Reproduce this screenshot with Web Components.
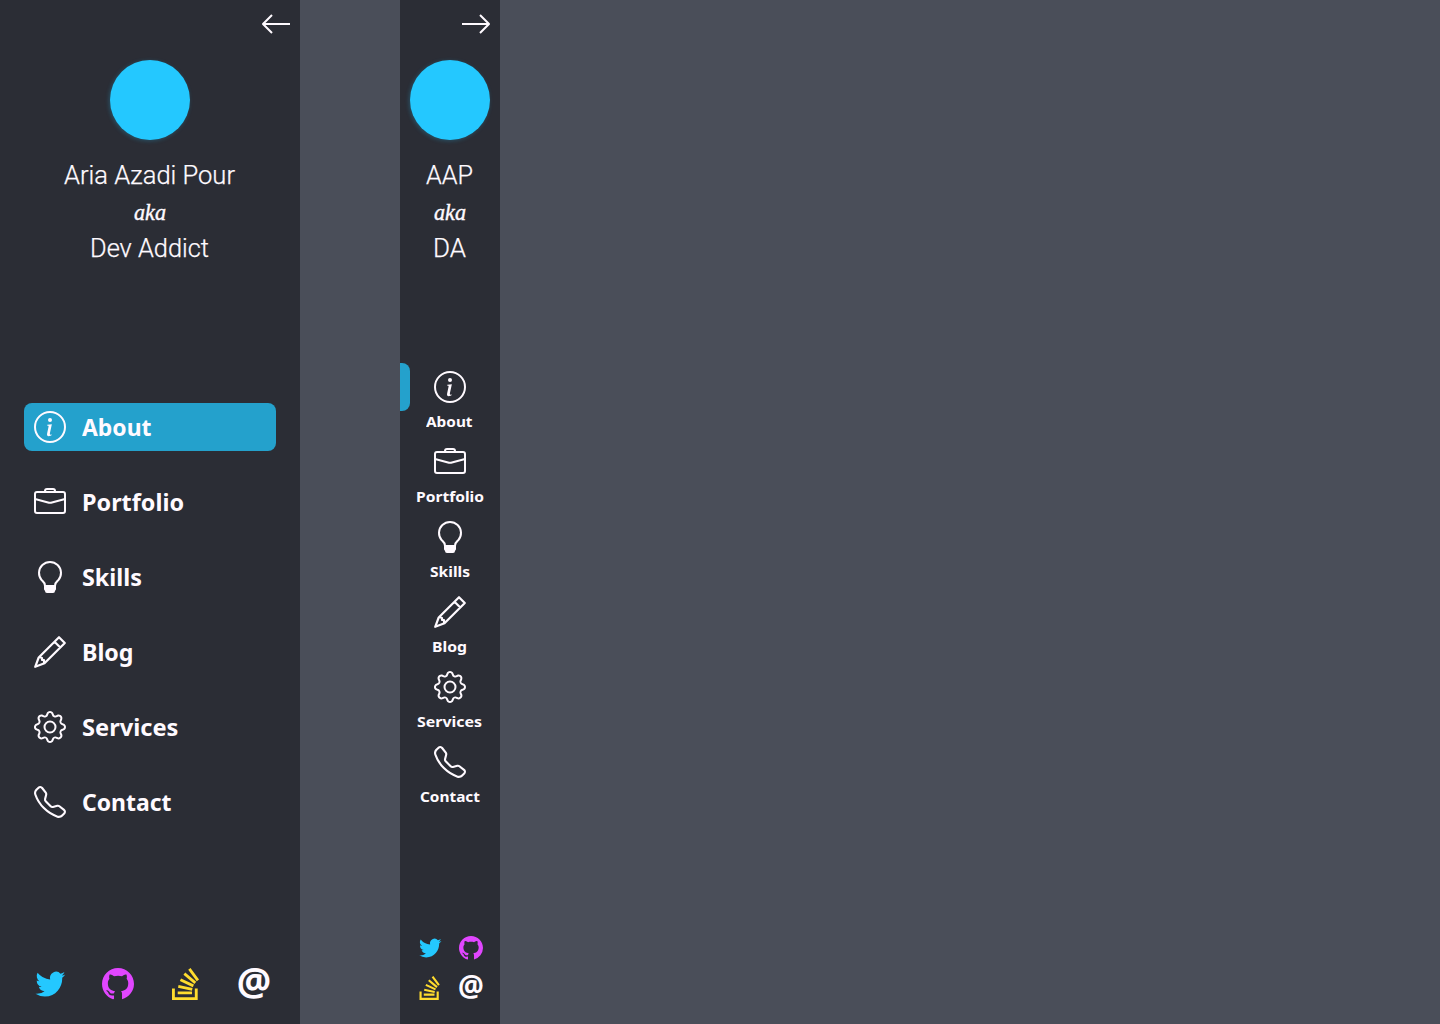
<!DOCTYPE html>
<html lang="en">
<head>
<meta charset="utf-8">
<title>Sidebar</title>
<style>
html,body{margin:0;height:100%}
body{background:#4a4e59;overflow:hidden;font-family:"Noto Sans",sans-serif;color:#fff}
</style>
</head>
<body>
<sidebar-showcase>
  <side-bar>
    <profile-card slot="profile" name="Aria Azadi Pour" name-width="171" alias="Dev Addict" alias-width="119"></profile-card>
    <nav-item icon="info" width="69.5" active>About</nav-item>
    <nav-item icon="briefcase" width="102">Portfolio</nav-item>
    <nav-item icon="bulb" width="60">Skills</nav-item>
    <nav-item icon="pencil" width="51.5">Blog</nav-item>
    <nav-item icon="gear" width="96.5">Services</nav-item>
    <nav-item icon="phone" width="89.5">Contact</nav-item>
  </side-bar>
  <side-bar compact>
    <profile-card slot="profile" name="AAP" name-width="47" alias="DA" alias-width="33"></profile-card>
    <nav-item compact icon="info" width="46.5" active>About</nav-item>
    <nav-item compact icon="briefcase" width="68">Portfolio</nav-item>
    <nav-item compact icon="bulb" width="40">Skills</nav-item>
    <nav-item compact icon="pencil" width="35">Blog</nav-item>
    <nav-item compact icon="gear" width="65">Services</nav-item>
    <nav-item compact icon="phone" width="60">Contact</nav-item>
  </side-bar>
</sidebar-showcase>
<script>
const ICONS = {
  left: '<path d="M30 16H3M12 7L3 16l9 9" fill="none" stroke="currentColor" stroke-width="2" stroke-linejoin="round"/>',
  right: '<path d="M2 16h27M20 7l9 9-9 9" fill="none" stroke="currentColor" stroke-width="2" stroke-linejoin="round"/>',
  info: '<circle cx="16" cy="16" r="15" fill="none" stroke="currentColor" stroke-width="2"/><g transform="scale(2)"><path d="M8.93 6.588l-2.29.287-.082.38.45.083c.294.07.352.176.288.469l-.738 3.468c-.194.897.105 1.319.808 1.319.545 0 1.178-.252 1.465-.598l.088-.416c-.2.176-.492.246-.686.246-.275 0-.375-.193-.304-.533L8.93 6.588z"/><circle cx="8" cy="4.5" r="1"/></g>',
  briefcase: '<g fill="none" stroke="currentColor" stroke-width="2"><rect x="1" y="6" width="30" height="21" rx="2"/><path d="M11 6V5a2 2 0 0 1 2-2h6a2 2 0 0 1 2 2v1M1 13l14 3.700q1 .3 2 0L31 13"/></g>',
  bulb: '<path d="M11 25c0-3.500-1.200-4-3.200-5.700A11 11 0 1 1 24.200 19.300C22.200 21 21 21.500 21 25" fill="none" stroke="currentColor" stroke-width="2"/><path d="M10 24h12v4a2 2 0 0 1-1 1.700V30a2 2 0 0 1-2 2h-6a2 2 0 0 1-2-2v-.300A2 2 0 0 1 10 28z"/>',
  pencil: '<g fill="none" stroke="currentColor" stroke-width="2.200" stroke-linejoin="round"><path d="M25 1.200L30.800 7 10.500 27.300 1.200 30.800 4.700 21.500zM20.500 5.700l5.800 5.800M5.500 21L8 22v2h2v2l1 1"/></g>',
  gear: '<g transform="scale(2)"><path d="M8 4.754a3.246 3.246 0 1 0 0 6.492 3.246 3.246 0 0 0 0-6.492zM5.754 8a2.246 2.246 0 1 1 4.492 0 2.246 2.246 0 0 1-4.492 0z"/><path d="M9.796 1.343c-.527-1.79-3.065-1.79-3.592 0l-.094.319a.873.873 0 0 1-1.255.52l-.292-.16c-1.64-.892-3.433.902-2.54 2.541l.159.292a.873.873 0 0 1-.52 1.255l-.319.094c-1.79.527-1.79 3.065 0 3.592l.319.094a.873.873 0 0 1 .52 1.255l-.16.292c-.892 1.64.901 3.434 2.541 2.54l.292-.159a.873.873 0 0 1 1.255.52l.094.319c.527 1.79 3.065 1.79 3.592 0l.094-.319a.873.873 0 0 1 1.255-.52l.292.16c1.64.893 3.434-.902 2.54-2.541l-.159-.292a.873.873 0 0 1 .52-1.255l.319-.094c1.79-.527 1.79-3.065 0-3.592l-.319-.094a.873.873 0 0 1-.52-1.255l.16-.292c.893-1.64-.902-3.433-2.541-2.54l-.292.159a.873.873 0 0 1-1.255-.52l-.094-.319zm-2.633.283c.246-.835 1.428-.835 1.674 0l.094.319a1.873 1.873 0 0 0 2.693 1.115l.291-.16c.764-.415 1.6.42 1.184 1.185l-.159.292a1.873 1.873 0 0 0 1.116 2.692l.318.094c.835.246.835 1.428 0 1.674l-.319.094a1.873 1.873 0 0 0-1.115 2.693l.16.291c.415.764-.42 1.6-1.185 1.184l-.291-.159a1.873 1.873 0 0 0-2.693 1.116l-.094.318c-.246.835-1.428.835-1.674 0l-.094-.319a1.873 1.873 0 0 0-2.692-1.115l-.292.16c-.764.415-1.6-.42-1.184-1.185l.159-.291A1.873 1.873 0 0 0 1.945 8.93l-.319-.094c-.835-.246-.835-1.428 0-1.674l.319-.094A1.873 1.873 0 0 0 3.06 4.377l-.16-.292c-.415-.764.42-1.6 1.185-1.184l.292.159a1.873 1.873 0 0 0 2.692-1.115l.094-.319z"/></g>',
  phone: '<path transform="scale(2)" d="M3.654 1.328a.678.678 0 0 0-1.015-.063L1.605 2.3c-.483.484-.661 1.169-.45 1.77a17.568 17.568 0 0 0 4.168 6.608 17.569 17.569 0 0 0 6.608 4.168c.601.211 1.286.033 1.77-.45l1.034-1.034a.678.678 0 0 0-.063-1.015l-2.307-1.794a.678.678 0 0 0-.58-.122l-2.19.547a1.745 1.745 0 0 1-1.657-.459L5.482 8.062a1.745 1.745 0 0 1-.46-1.657l.548-2.19a.678.678 0 0 0-.122-.58L3.654 1.328zM1.884.511a1.745 1.745 0 0 1 2.612.163L6.29 2.98c.329.423.445.974.315 1.494l-.547 2.19a.678.678 0 0 0 .178.643l2.457 2.457a.678.678 0 0 0 .644.178l2.189-.547a1.745 1.745 0 0 1 1.494.315l2.306 1.794c.829.645.905 1.87.163 2.611l-1.034 1.034c-.74.74-1.846 1.065-2.877.702a18.634 18.634 0 0 1-7.01-4.42 18.634 18.634 0 0 1-4.42-7.009c-.362-1.03-.037-2.137.703-2.877L1.885.511z"/>',
  twitter: '<path transform="translate(1.500 -.2) scale(1.860 1.920)" d="M5.026 15c6.038 0 9.341-5.003 9.341-9.334 0-.14 0-.282-.006-.422A6.685 6.685 0 0 0 16 3.542a6.658 6.658 0 0 1-1.889.518 3.301 3.301 0 0 0 1.447-1.817 6.533 6.533 0 0 1-2.087.793A3.286 3.286 0 0 0 7.875 6.03a9.325 9.325 0 0 1-6.767-3.429 3.289 3.289 0 0 0 1.018 4.382A3.323 3.323 0 0 1 .64 6.575v.045a3.288 3.288 0 0 0 2.632 3.218 3.203 3.203 0 0 1-.865.115 3.23 3.23 0 0 1-.614-.057 3.283 3.283 0 0 0 3.067 2.277A6.588 6.588 0 0 1 .78 13.58a6.32 6.32 0 0 1-.78-.045A9.344 9.344 0 0 0 5.026 15z"/>',
  github: '<path transform="scale(2)" d="M8 0C3.58 0 0 3.58 0 8c0 3.54 2.29 6.53 5.47 7.59.4.07.55-.17.55-.38 0-.19-.01-.82-.01-1.49-2.01.37-2.53-.49-2.69-.94-.09-.23-.48-.94-.82-1.13-.28-.15-.68-.52-.01-.53.63-.01 1.08.58 1.23.82.72 1.21 1.87.87 2.33.66.07-.52.28-.87.51-1.07-1.78-.2-3.64-.89-3.64-3.95 0-.87.31-1.59.82-2.15-.08-.2-.36-1.02.08-2.12 0 0 .67-.21 2.2.82.64-.18 1.32-.27 2-.27.68 0 1.36.09 2 .27 1.53-1.04 2.2-.82 2.2-.82.44 1.1.16 1.92.08 2.12.51.56.82 1.27.82 2.15 0 3.07-1.87 3.75-3.65 3.95.29.25.54.73.54 1.48v2.600A8.012 8.012 0 0 0 16 8c0-4.42-3.58-8-8-8z"/>',
  stack: '<path transform="scale(2)" d="M12.412 14.572V10.29h1.428V16H1v-5.71h1.428v4.282h9.984zM3.857 13.145h7.137v-1.428H3.857v1.428zM10.254 0 9.108.852l4.26 5.727 1.146-.852L10.254 0zm-3.54 3.377 5.484 4.567.913-1.097L7.627 2.28l-.914 1.097zM4.922 6.55l6.47 3.013.603-1.294-6.47-3.013-.603 1.294zm-.925 3.344 6.985 1.469.294-1.398-6.985-1.468-.294 1.397z"/>',
  at: '<text x="-1.200" y="28.200" textLength="34.400" lengthAdjust="spacingAndGlyphs" font-family="Noto Sans" font-weight="700" font-size="40">@</text>'
};

customElements.define('ui-icon', class extends HTMLElement {
  constructor() {
    super();
    this.attachShadow({mode: 'open'});
  }
  connectedCallback() {
    const s = this.getAttribute('size') || 32;
    this.shadowRoot.innerHTML = `<style>:host{display:block;flex:none;width:${s}px;height:${s}px}svg{display:block;overflow:visible}</style>
      <svg width="${s}" height="${s}" viewBox="0 0 32 32" fill="currentColor">${ICONS[this.getAttribute('name')]}</svg>`;
  }
});

/* One line of text condensed or expanded to a fixed width. */
customElements.define('fit-text', class extends HTMLElement {
  constructor() {
    super();
    this.attachShadow({mode: 'open'}).innerHTML = `<style>:host{display:block;flex:none;white-space:nowrap}span{display:inline-block;transform-origin:0 50%}</style><span><slot></slot></span>`;
  }
  connectedCallback() {
    const w = parseFloat(this.getAttribute('width'));
    const span = this.shadowRoot.querySelector('span');
    this.style.width = w + 'px';
    span.style.transform = `scaleX(${w / span.getBoundingClientRect().width})`;
  }
});

customElements.define('profile-card', class extends HTMLElement {
  constructor() {
    super();
    this.attachShadow({mode: 'open'});
  }
  connectedCallback() {
    const a = n => this.getAttribute(n);
    this.shadowRoot.innerHTML = `<style>
      :host{display:flex;flex-direction:column;align-items:center}
      .avatar{width:80px;height:80px;border-radius:50%;background:#24c8ff;box-shadow:-1px 1px 4px rgba(36,200,255,.25)}
      .name{font:300 25px/36px Roboto,sans-serif;-webkit-text-stroke:.25px currentColor;padding-right:1px}
      .name.first{margin-top:18px}
      .aka{font:italic 400 23px/37px "Liberation Serif",serif;-webkit-text-stroke:.4px currentColor}
    </style>
    <div class="avatar"></div>
    <fit-text class="name first" width="${a('name-width')}">${a('name')}</fit-text>
    <fit-text class="aka" width="32">aka</fit-text>
    <fit-text class="name" width="${a('alias-width')}">${a('alias')}</fit-text>`;
  }
});

customElements.define('nav-item', class extends HTMLElement {
  constructor() {
    super();
    this.attachShadow({mode: 'open'});
  }
  connectedCallback() {
    this.shadowRoot.innerHTML = `<style>
      :host{display:flex;align-items:center;gap:16px;box-sizing:border-box;height:48px;margin:0 24px 27px;padding:0 10px;border-radius:8px;font:700 22.500px/48px "Noto Sans",sans-serif}
      :host([active]){background:#24a1cc}
      fit-text{padding-top:1px}
      :host([compact]){position:relative;flex-direction:column;gap:8px;height:75px;margin:0;padding:8px 0 0;border-radius:0;background:none;font-size:15px;line-height:20px}
      :host([compact]) fit-text{padding:0 1px 0 0}
      :host([compact][active])::before{content:"";position:absolute;left:0;top:0;width:10px;height:48px;border-radius:0 8px 8px 0;background:#24a1cc}
    </style>
    <ui-icon name="${this.getAttribute('icon')}"></ui-icon>
    <fit-text width="${this.getAttribute('width')}">${this.textContent}</fit-text>`;
  }
});

customElements.define('social-links', class extends HTMLElement {
  constructor() {
    super();
    this.attachShadow({mode: 'open'});
  }
  connectedCallback() {
    const s = this.hasAttribute('compact') ? 24 : 32;
    this.shadowRoot.innerHTML = `<style>
      :host{display:flex;justify-content:space-between;padding:0 30px 24px 34px}
      :host([compact]){display:grid;grid-template-columns:24px 24px;justify-content:start;gap:16px 17px;padding:0 0 24px 18px}
    </style>
    <ui-icon size="${s}" name="twitter" style="color:#24c8ff"></ui-icon>
    <ui-icon size="${s}" name="github" style="color:#e146ff"></ui-icon>
    <ui-icon size="${s}" name="stack" style="color:#ffdc2e"></ui-icon>
    <ui-icon size="${s}" name="at" style="color:#fffaff"></ui-icon>`;
  }
});

customElements.define('side-bar', class extends HTMLElement {
  constructor() {
    super();
    this.attachShadow({mode: 'open'});
  }
  connectedCallback() {
    const c = this.hasAttribute('compact');
    this.shadowRoot.innerHTML = `<style>
      :host{display:flex;flex-direction:column;flex:none;box-sizing:border-box;width:300px;height:100%;background:#2b2d35;color:#fffaff}
      :host([compact]){width:100px}
      header{display:flex;justify-content:flex-end;flex:none;height:52px;padding:8px 8px 0 0}
      .profile{height:343px;flex:none}
      :host([compact]) .profile{height:303px}
      nav{flex:1}
    </style>
    <header><ui-icon name="${c ? 'right' : 'left'}"></ui-icon></header>
    <div class="profile"><slot name="profile"></slot></div>
    <nav><slot></slot></nav>
    <social-links ${c ? 'compact' : ''}></social-links>`;
  }
});

customElements.define('sidebar-showcase', class extends HTMLElement {
  constructor() {
    super();
    this.attachShadow({mode: 'open'}).innerHTML = `<style>:host{display:flex;gap:100px;height:100vh}</style><slot></slot>`;
  }
});
</script>
</body>
</html>
